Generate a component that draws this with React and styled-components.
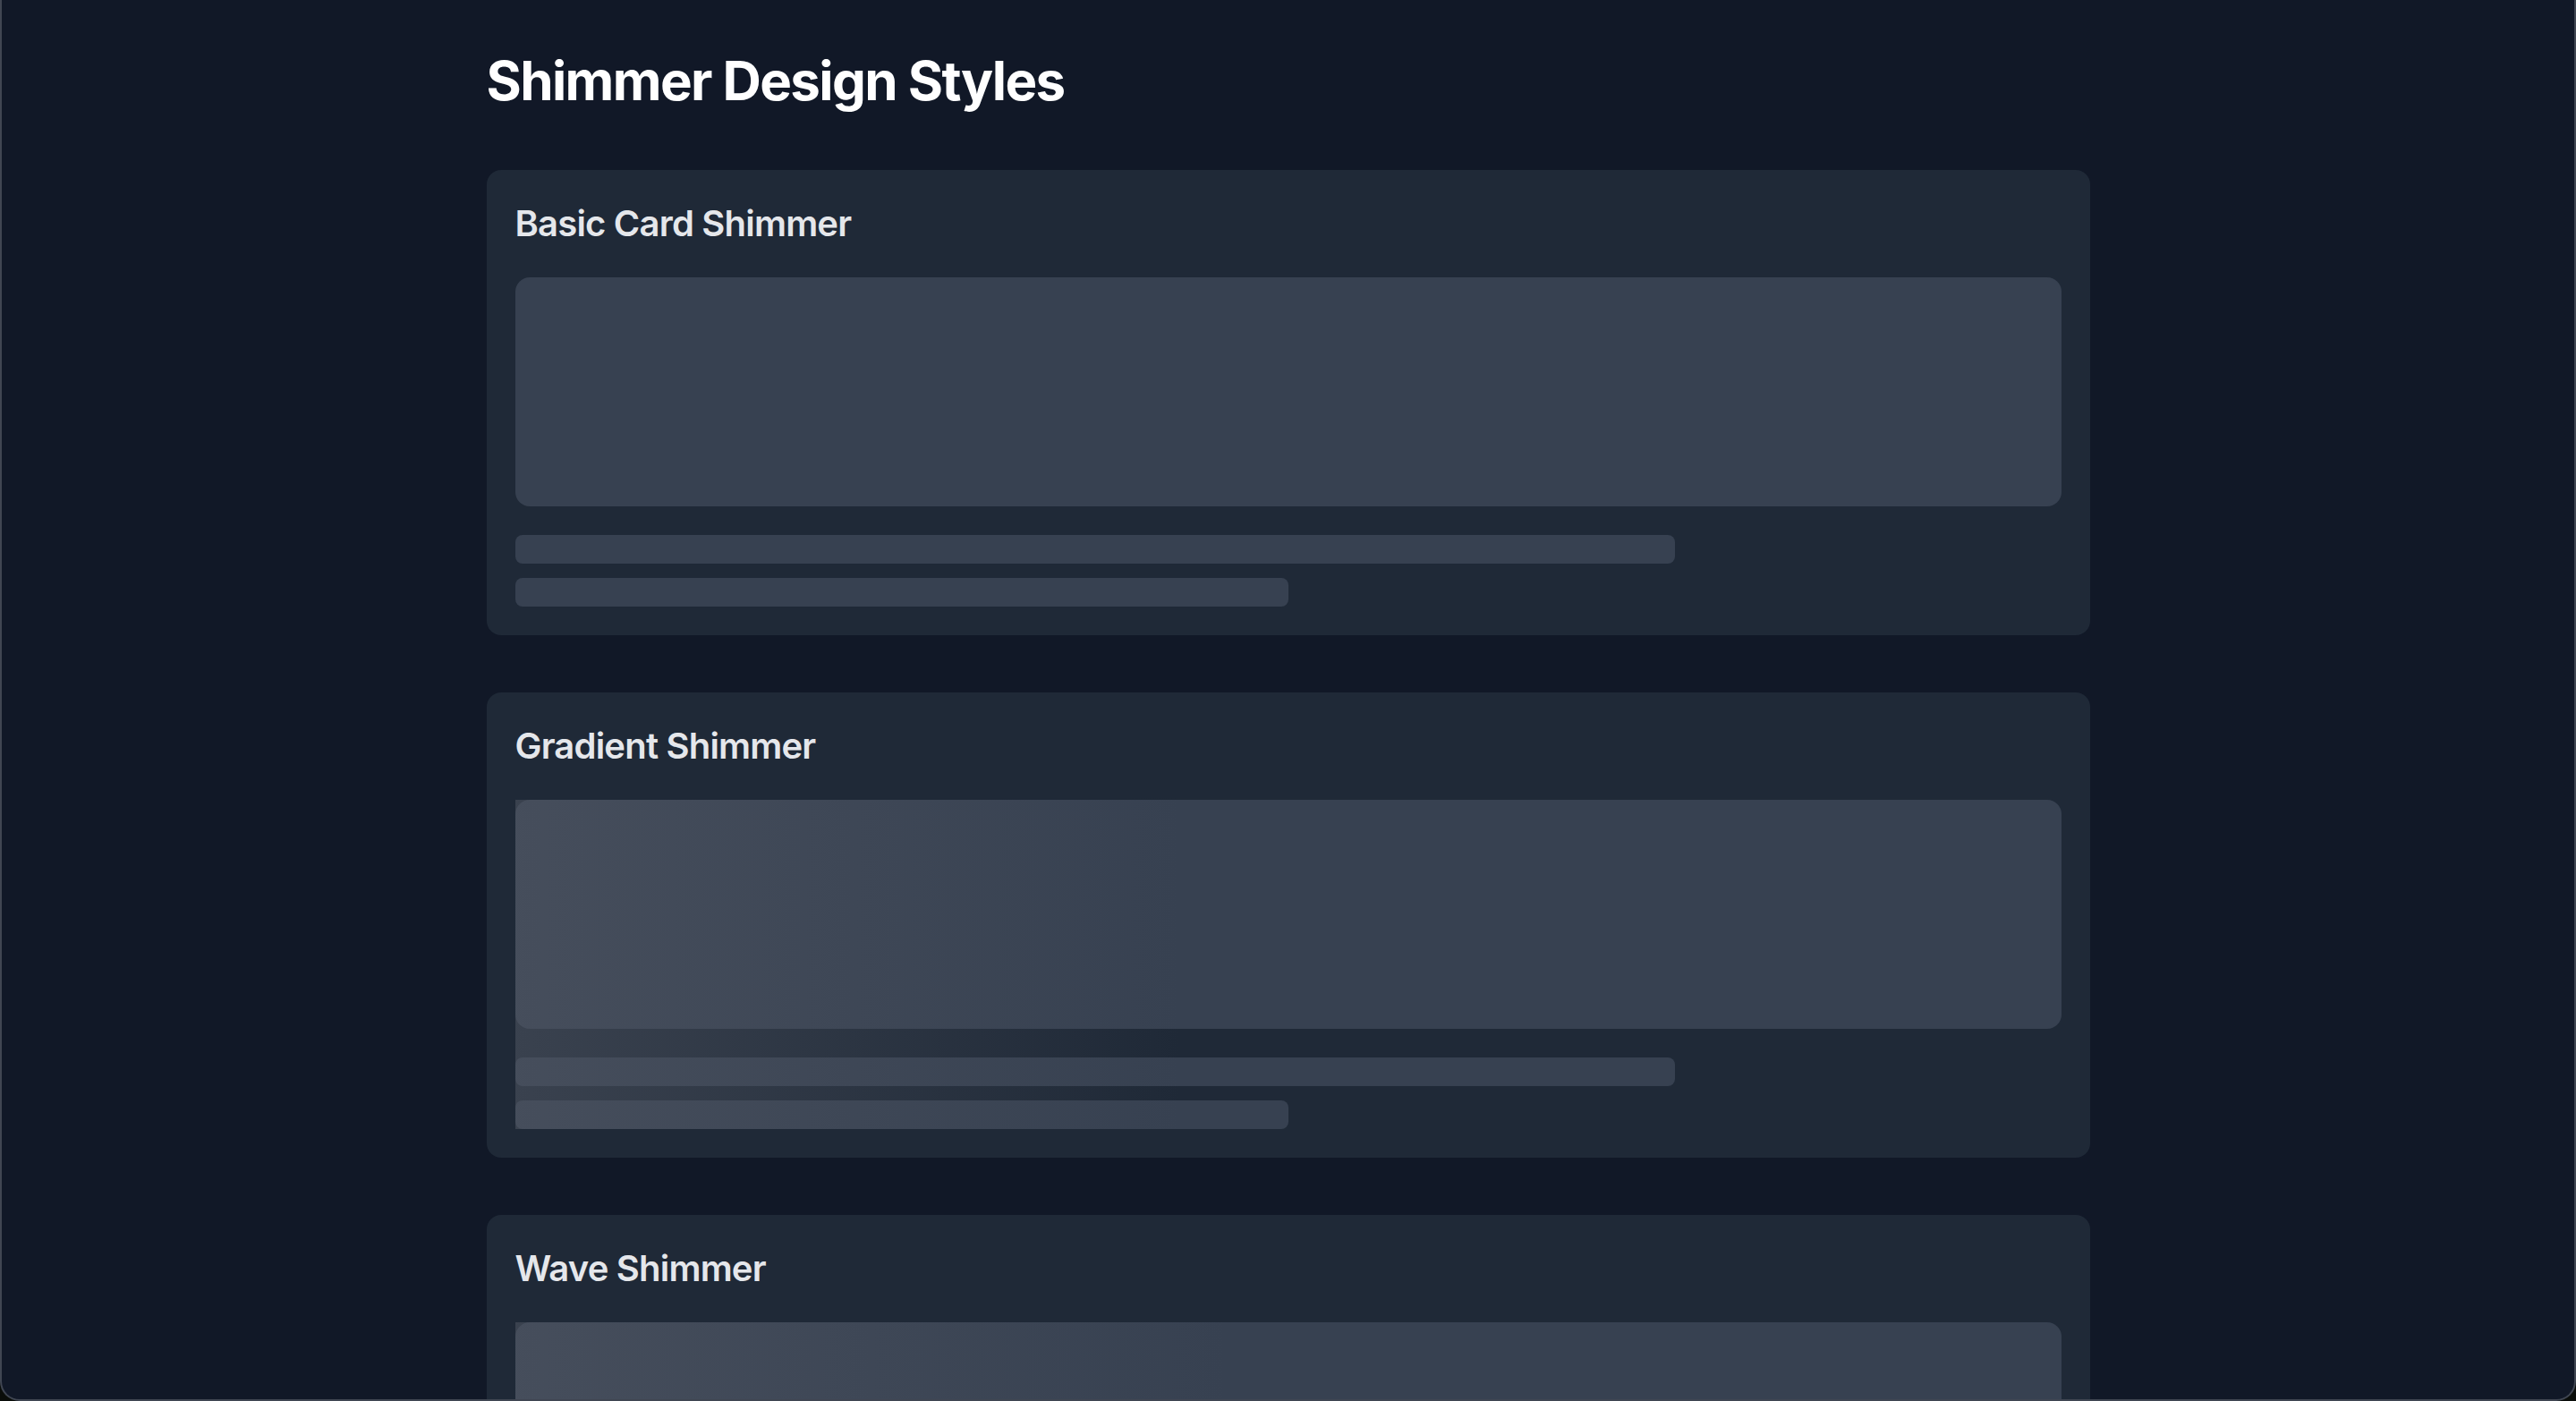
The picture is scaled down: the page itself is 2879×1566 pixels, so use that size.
import React from "react";
import styled, { createGlobalStyle } from "styled-components";

const GlobalStyle = createGlobalStyle`
  html, body {
    margin: 0;
    padding: 0;
    background: #0a0d0a;
  }
  body {
    font-family: Inter, "Noto Sans", "Liberation Sans", sans-serif;
    -webkit-font-smoothing: antialiased;
  }
  * { box-sizing: border-box; }
`;

const Window = styled.div`
  height: 100vh;
  overflow: hidden;
  background: #111827;
  border: 2px solid rgba(255, 255, 255, 0.2);
  border-top: none;
  border-radius: 0 0 22px 22px;
`;

const Container = styled.main`
  max-width: 1792px;
  margin: 0 auto;
  padding-top: 54px;
`;

const PageTitle = styled.h1`
  margin: 0 0 64px;
  font-size: 60px;
  line-height: 72px;
  font-weight: 700;
  color: #ffffff;
  letter-spacing: -1.6px;
`;

const Sections = styled.div`
  display: flex;
  flex-direction: column;
  gap: 64px;
`;

const Card = styled.section`
  background: #1f2937;
  border-radius: 16px;
  padding: 32px;
`;

const CardTitle = styled.h2`
  margin: 0 0 32px;
  font-size: 40px;
  line-height: 56px;
  font-weight: 600;
  color: #e5e7eb;
  letter-spacing: -0.8px;
`;

const SkeletonGroup = styled.div`
  position: relative;
  overflow: hidden;
`;

const Block = styled.div`
  height: 256px;
  border-radius: 16px;
  background: #374151;
`;

const Lines = styled.div`
  margin-top: 32px;
  display: flex;
  flex-direction: column;
  gap: 16px;
`;

const Line = styled.div`
  height: 32px;
  width: ${(p) => p.$w};
  border-radius: 8px;
  background: #374151;
`;

const ShimmerOverlay = styled.div`
  position: absolute;
  inset: 0;
  pointer-events: none;
  background: ${(p) =>
    p.$variant === "wave"
      ? "linear-gradient(90deg, rgba(84, 90, 102, 0.5) 0%, rgba(84, 90, 102, 0.25) 22%, rgba(84, 90, 102, 0) 46%)"
      : "linear-gradient(90deg, rgba(84, 90, 102, 0.5) 0%, rgba(84, 90, 102, 0.25) 21%, rgba(84, 90, 102, 0) 43%)"};
`;

const sections = [
  { title: "Basic Card Shimmer", variant: null },
  { title: "Gradient Shimmer", variant: "gradient" },
  { title: "Wave Shimmer", variant: "wave" },
];

function ShimmerCard({ title, variant }) {
  return (
    <Card>
      <CardTitle>{title}</CardTitle>
      <SkeletonGroup>
        <Block />
        <Lines>
          <Line $w="75%" />
          <Line $w="50%" />
        </Lines>
        {variant && <ShimmerOverlay $variant={variant} />}
      </SkeletonGroup>
    </Card>
  );
}

export default function App() {
  return (
    <>
      <GlobalStyle />
      <Window>
        <Container>
          <PageTitle>Shimmer Design Styles</PageTitle>
          <Sections>
            {sections.map((s) => (
              <ShimmerCard key={s.title} title={s.title} variant={s.variant} />
            ))}
          </Sections>
        </Container>
      </Window>
    </>
  );
}
